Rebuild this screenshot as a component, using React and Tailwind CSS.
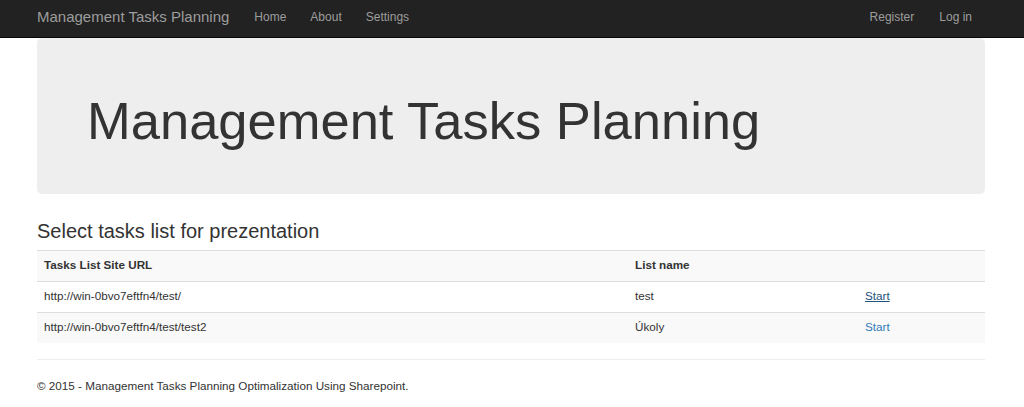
import React from 'react'

const rows = [
  { url: 'http://win-0bvo7eftfn4/test/', name: 'test', active: true },
  { url: 'http://win-0bvo7eftfn4/test/test2', name: 'Úkoly', active: false },
]

function NavLink({ children }) {
  return <a href="#" className="text-[12px] text-[#9d9d9d]">{children}</a>
}

export default function App() {
  return (
    <div className="min-h-[407px] bg-white text-[#333]" style={{ fontFamily: '"Liberation Sans", Arial, sans-serif' }}>
      <nav className="h-[38px] border-b border-[#080808] bg-[#222]">
        <div className="ml-[37px] flex h-full w-[948px] items-center justify-between pb-[3px]">
          <div className="flex items-center">
            <a href="#" className="text-[15px] text-[#9d9d9d]">Management Tasks Planning</a>
            <div className="ml-[25px] flex items-center gap-[24px]">
              <NavLink>Home</NavLink>
              <NavLink>About</NavLink>
              <NavLink>Settings</NavLink>
            </div>
          </div>
          <div className="mr-[13px] flex items-center gap-[25px]">
            <NavLink>Register</NavLink>
            <NavLink>Log in</NavLink>
          </div>
        </div>
      </nav>

      <div className="ml-[37px] w-[948px]">
        <div className="h-[156px] rounded-[5px] bg-[#eee] pl-[50px] pt-[54px]">
          <h1 className="text-[52.5px] leading-[57px] text-[#333]">Management Tasks Planning</h1>
        </div>

        <h3 className="mt-[26px] text-[20px] leading-[22px]">Select tasks list for prezentation</h3>

        <div className="mt-[8px] text-[11.7px]">
          <div className="grid h-[31px] grid-cols-[591px_230px_127px] items-center border-t border-[#ddd] bg-[#f9f9f9] pb-[2px] font-bold">
            <div className="pl-[7px]">Tasks List Site URL</div>
            <div className="pl-[7px]">List name</div>
            <div />
          </div>
          {rows.map((r, i) => (
            <div
              key={r.url}
              className={`grid h-[31px] grid-cols-[591px_230px_127px] items-center border-t border-[#ddd] pb-[2px] ${i % 2 ? 'bg-[#f9f9f9]' : 'bg-white'}`}
            >
              <div className="pl-[7px]">{r.url}</div>
              <div className="pl-[7px]">{r.name}</div>
              <div className="pl-[7px]">
                <a href="#" className={r.active ? 'text-[#23527c] underline' : 'text-[#337ab7]'}>Start</a>
              </div>
            </div>
          ))}
        </div>

        <hr className="mt-[16px] border-t border-[#eee]" />
        <footer className="pt-[17px] text-[11.7px] leading-[17px]">
          © 2015 - Management Tasks Planning Optimalization Using Sharepoint.
        </footer>
      </div>
    </div>
  )
}
